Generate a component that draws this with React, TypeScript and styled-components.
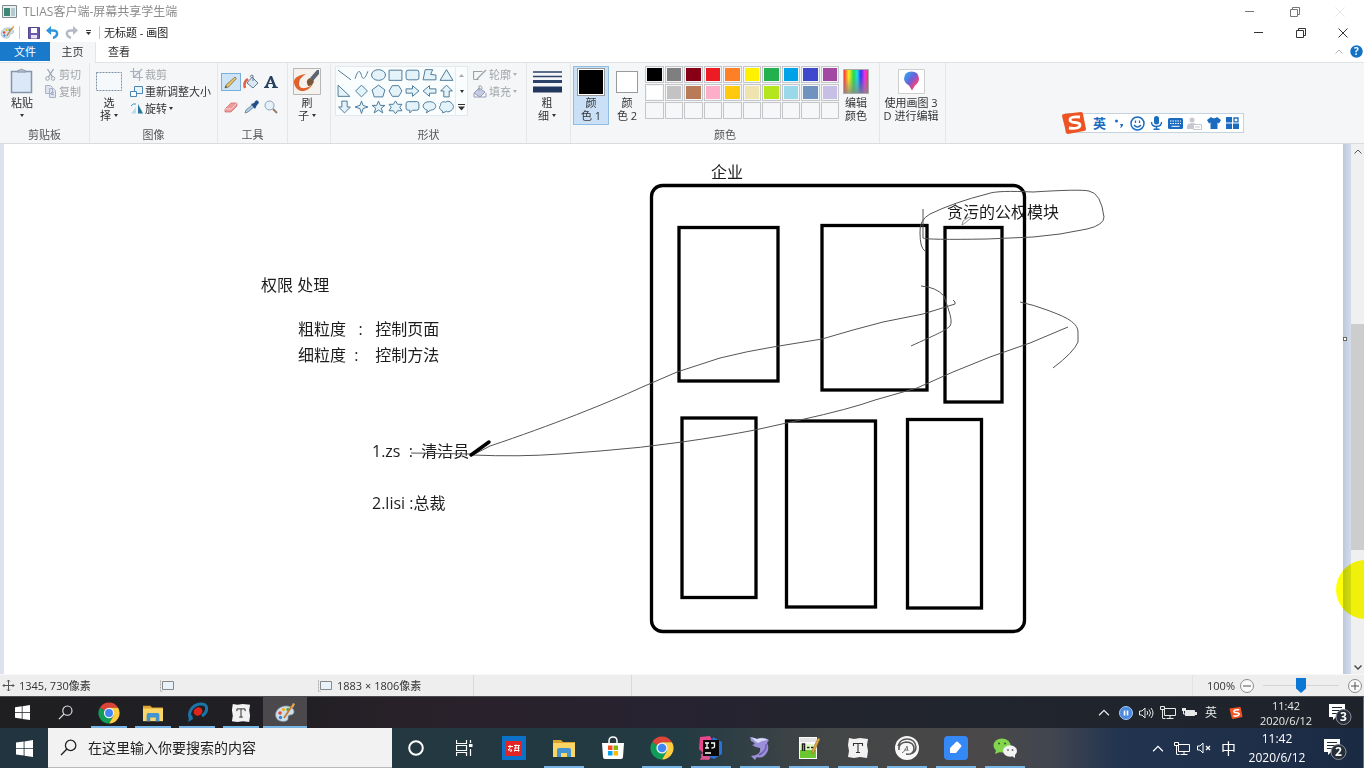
import React from "react";
import styled, { createGlobalStyle, css } from "styled-components";

const GlobalStyle = createGlobalStyle`
  * { box-sizing: border-box; }
  html, body { margin: 0; padding: 0; }
  body {
    font-family: "Open Sans", "Noto Sans CJK SC", sans-serif;
    font-size: 11px;
    line-height: 13px;
    color: #333;
    background: #fff;
    overflow: hidden;
  }
  button, input, select { font: inherit; color: inherit; }
  svg { display: block; flex: none; }
`;

const plainButton = css`
  border: 0;
  padding: 0;
  margin: 0;
  background: none;
  display: flex;
  align-items: center;
  justify-content: center;
`;

const Screen = styled.div`
  position: relative;
  display: flex;
  flex-direction: column;
  min-height: 100vh;
  overflow: hidden;
`;

/* ---------- window chrome ---------- */

const TitleBar = styled.header`
  display: flex;
  align-items: center;
  height: 23px;
  padding-left: 2px;
  gap: 5px;
  font-size: 12px;
  line-height: 16px;
  color: #8a8a8a;
`;

const QuickBar = styled.div`
  display: flex;
  align-items: center;
  height: 19px;
  color: #222;
`;

const Spacer = styled.div`
  flex: 1;
`;

const WindowButton = styled.button<{ $width: number; $tone: string }>`
  ${plainButton}
  width: ${(p) => p.$width}px;
  height: 19px;
  color: ${(p) => p.$tone};
`;

const WindowButtons = styled.div<{ $end?: number }>`
  display: flex;
  padding-right: ${(p) => p.$end ?? 0}px;
`;

const QuickButton = styled.button<{ $narrow?: boolean }>`
  ${plainButton}
  width: ${(p) => (p.$narrow ? 14 : 19)}px;
  height: 17px;
`;

const Separator = styled.span`
  width: 1px;
  height: 13px;
  background: #c8c8c8;
  margin: 0 4px;
`;

const TabRow = styled.nav`
  display: flex;
  height: 20px;
`;

const Tab = styled.button<{ $kind?: "file" | "active" }>`
  ${plainButton}
  width: ${(p) => (p.$kind === "file" ? 50 : 46)}px;
  height: ${(p) => (p.$kind === "active" ? 21 : 19)}px;
  padding-bottom: ${(p) => (p.$kind === "active" ? 2 : 0)}px;
  background: ${(p) => (p.$kind === "file" ? "#1979ca" : p.$kind === "active" ? "#f4f6f7" : "transparent")};
  color: ${(p) => (p.$kind === "file" ? "#fff" : "#333")};
  border-right: ${(p) => (p.$kind === "active" ? "1px solid #e3e5e8" : "0")};
  z-index: 1;
`;

/* ---------- ribbon ---------- */

const Ribbon = styled.section`
  display: flex;
  height: 82px;
  background: #f4f6f7;
  border-top: 1px solid #dfe3e6;
  border-bottom: 1px solid #d8dcdf;
`;

const GroupBox = styled.div<{ $width: number }>`
  width: ${(p) => p.$width}px;
  display: flex;
  flex-direction: column;
  justify-content: space-between;
  flex: none;
  padding: 3px 0 2px;
  border-right: 1px solid #e4e7ea;
`;

const GroupBody = styled.div<{ $pad?: number; $gap?: number }>`
  display: flex;
  align-items: flex-start;
  padding-left: ${(p) => p.$pad ?? 0}px;
  gap: ${(p) => p.$gap ?? 0}px;
`;

const GroupName = styled.div`
  text-align: center;
  color: #555;
`;

const BigButton = styled.button<{ $width: number; $on?: boolean }>`
  ${plainButton}
  flex-direction: column;
  justify-content: flex-start;
  width: ${(p) => p.$width}px;
  height: 59px;
  border: 1px solid ${(p) => (p.$on ? "#92bde3" : "transparent")};
  background: ${(p) => (p.$on ? "#c9e0f7" : "transparent")};
  white-space: nowrap;
`;

const BigIcon = styled.span`
  display: flex;
  align-items: center;
  justify-content: center;
  height: 29px;
`;

const TextLine = styled.span`
  display: flex;
  align-items: center;
  gap: 3px;
  height: 13px;
`;

const ButtonColumn = styled.div`
  display: flex;
  flex-direction: column;
`;

const SmallButton = styled.button<{ $dim?: boolean }>`
  ${plainButton}
  justify-content: flex-start;
  gap: 2px;
  height: 17px;
  color: ${(p) => (p.$dim ? "#a3a6aa" : "#333")};
  white-space: nowrap;
`;

const Caret = styled.i<{ $dim?: boolean }>`
  border: 2px solid transparent;
  border-top: 3px solid ${(p) => (p.$dim ? "#b0b0b0" : "#333")};
  border-bottom: 0;
`;

const ToolGrid = styled.div`
  display: grid;
  grid-template-columns: repeat(3, 20px);
  grid-auto-rows: 18px;
  row-gap: 7px;
  padding: 7px 0 0 3px;
`;

const ToolButton = styled.button<{ $on?: boolean }>`
  ${plainButton}
  border: 1px solid ${(p) => (p.$on ? "#7aaedb" : "transparent")};
  background: ${(p) => (p.$on ? "#cde4f8" : "transparent")};
`;

const Gallery = styled.div`
  display: flex;
  border: 1px solid #e3e8ec;
  background: #fafdfe;
`;

const ShapeGrid = styled.div`
  display: grid;
  grid-template-columns: repeat(7, 17px);
  grid-auto-rows: 16px;
`;

const ShapeButton = styled.button`
  ${plainButton}
`;

const GalleryScroll = styled.div`
  display: flex;
  flex-direction: column;
  width: 12px;
  border-left: 1px solid #e9edf0;
`;

const GalleryArrow = styled.button`
  ${plainButton}
  height: 16px;
`;

const Well = styled.span<{ $color: string; $size: number }>`
  width: ${(p) => p.$size}px;
  height: ${(p) => p.$size}px;
  background: ${(p) => p.$color};
  border: 1px solid #9a9a9a;
  box-shadow: inset 0 0 0 1px #fff;
`;

const Palette = styled.div`
  display: grid;
  width: 194px;
  grid-template-columns: repeat(10, 1fr);
  grid-auto-rows: 17px;
  gap: 1px;
`;

const Swatch = styled.button<{ $color: string }>`
  border: 1px solid #c4c6c9;
  padding: 1px;
  background: ${(p) => p.$color} content-box;
`;

/* ---------- drawing area ---------- */

const Workspace = styled.main`
  position: relative;
  flex: 1;
  min-height: 530px;
  display: flex;
  background: linear-gradient(90deg, #dde3ee, #c2cde0);
  padding-left: 4px;
`;

const Canvas = styled.div`
  position: relative;
  flex: 1;
  overflow: hidden;
  background: #fff;
`;

const CanvasEdge = styled.div`
  position: relative;
  width: 8px;
  background: linear-gradient(90deg, #bdc8db, #d3dceb);
`;

const ResizeHandle = styled.i`
  position: absolute;
  top: 193px;
  left: 0;
  width: 4px;
  height: 4px;
  border: 1px solid #666;
  background: #fff;
`;

const ScrollTrack = styled.div`
  display: flex;
  flex-direction: column;
  align-items: center;
  width: 13px;
  background: #f0f0f0;
  color: #444;
`;

const ScrollButton = styled.button`
  ${plainButton}
  width: 13px;
  height: 14px;
`;

const ScrollThumb = styled.div`
  width: 13px;
  height: 226px;
  background: #cdcdcd;
`;

const TrackPart = styled.div<{ $grow: number }>`
  flex: ${(p) => p.$grow};
`;

const CanvasText = styled.span<{ $x: number; $y: number }>`
  position: absolute;
  left: ${(p) => p.$x}px;
  top: ${(p) => p.$y}px;
  font-size: 16px;
  line-height: 20px;
  color: #1c1c1c;
  white-space: pre;
`;

const Drawing = styled.svg`
  position: absolute;
  left: 0;
  top: 0;
`;

const PointerHalo = styled.i`
  position: absolute;
  right: -31px;
  top: 416px;
  width: 59px;
  height: 59px;
  border-radius: 50%;
  background: #ffff0a;
  mix-blend-mode: multiply;
`;

/* ---------- input method bar ---------- */

const ImeBar = styled.div`
  position: absolute;
  top: 113px;
  right: 120px;
  display: flex;
  align-items: center;
  height: 20px;
  padding: 0 1px 0 24px;
  background: #fff;
  border: 1px solid #c5d3df;
  color: #1b6cc0;
`;

const ImeLogo = styled.span`
  position: absolute;
  left: -5px;
  top: -4px;
`;

const ImeButton = styled.button`
  ${plainButton}
  width: 19px;
  height: 18px;
  font-size: 13px;
  font-weight: 700;
`;

/* ---------- status bar ---------- */

const StatusBar = styled.footer`
  display: flex;
  align-items: center;
  height: 22px;
  background: #eeeeee;
  border-top: 1px solid #f8f8f8;
`;

const StatusCell = styled.div<{ $line?: boolean }>`
  display: flex;
  align-items: center;
  gap: 4px;
  width: 158px;
  height: 21px;
  padding-left: 2px;
  border-right: 1px solid ${(p) => (p.$line ? "#d9d9d9" : "transparent")};
`;

const ZoomArea = styled.div`
  display: flex;
  align-items: center;
  gap: 5px;
  padding: 0 2px 0 14px;
  height: 21px;
  border-left: 1px solid #e2e2e2;
`;

const RoundButton = styled.button`
  ${plainButton}
  width: 14px;
  height: 14px;
  border: 1px solid #8b8b8b;
  border-radius: 50%;
  background: #fafafa;
`;

const ZoomSlider = styled.input`
  appearance: none;
  width: 84px;
  height: 16px;
  margin: 0;
  background: linear-gradient(#d6d6d6, #d6d6d6) center / 76px 1px no-repeat;
  &::-webkit-slider-thumb {
    appearance: none;
    width: 10px;
    height: 15px;
    background: #0b78d4;
    clip-path: polygon(0 0, 100% 0, 100% 70%, 50% 100%, 0 70%);
  }
`;

/* ---------- task bars ---------- */

const InnerTaskbar = styled.div`
  display: flex;
  height: 32px;
  background: linear-gradient(90deg, #1f1f22 0, #211f24 22%, #292129 30%, #272331 50%, #22252e 62%, #1e232b 100%);
  border-top: 1px solid #4d4d50;
  color: #e8e8e8;
`;

const OuterTaskbar = styled.div`
  display: flex;
  height: 40px;
  background: linear-gradient(90deg, #22343f 0, #233941 40%, #233b43 50%, #424546 60%, #4a4848 72%, #424650 77%, #223450 82%, #1b2a43 100%);
  color: #fff;
`;

const TaskButton = styled.button<{ $width: number; $line?: number; $on?: boolean }>`
  ${plainButton}
  width: ${(p) => p.$width}px;
  background: ${(p) => (p.$on ? "#4b494c" : "none")};
  ${(p) =>
    p.$line &&
    css`
      background-image: linear-gradient(#76b5e6, #76b5e6);
      background-size: ${p.$line}px 2px;
      background-position: center bottom;
      background-repeat: no-repeat;
    `}
`;

const SearchBox = styled.label`
  display: flex;
  align-items: center;
  gap: 11px;
  width: 344px;
  padding-left: 12px;
  background: #f2f2f2;
  border-bottom: 1px solid #b9b9b9;
  color: #222;
`;

const SearchInput = styled.input`
  flex: 1;
  min-width: 0;
  border: 0;
  padding: 0;
  outline: 0;
  background: none;
  font-size: 14px;
  line-height: 20px;
  &::placeholder { color: #222; opacity: 1; }
`;

const Tray = styled.div<{ $end: number }>`
  display: flex;
  align-items: center;
  padding-right: ${(p) => p.$end}px;
`;

const TrayButton = styled.button<{ $width?: number; $size?: number }>`
  ${plainButton}
  width: ${(p) => p.$width ?? 22}px;
  height: 28px;
  font-size: ${(p) => p.$size ?? 12}px;
`;

const Clock = styled.button<{ $size: number; $line: number; $width: number }>`
  ${plainButton}
  flex-direction: column;
  width: ${(p) => p.$width}px;
  font-size: ${(p) => p.$size}px;
  line-height: ${(p) => p.$line}px;
`;

const DesktopEdge = styled.i`
  width: 1px;
  align-self: stretch;
  background: #6b7079;
`;

/* ---------- icons ---------- */

type IconProps = { w: number; h?: number; box?: string; children: React.ReactNode };
const Icon = ({ w, h = w, box, children }: IconProps) => (
  <svg width={w} height={h} viewBox={box ?? `0 0 ${w} ${h}`} fill="none" aria-hidden="true">
    {children}
  </svg>
);

const MinIcon = () => <Icon w={10}><path d="M0 4.5h9" stroke="currentColor" /></Icon>;
const RestoreIcon = () => (
  <Icon w={10}><path d="M.5 2.5h7v7h-7zM2.500 2.500v-2h7v7h-2" stroke="currentColor" /></Icon>
);
const CloseIcon = () => <Icon w={10}><path d="M.5.5l9 9M9.500.5l-9 9" stroke="currentColor" /></Icon>;
const UpIcon = ({ w = 8 }: { w?: number }) => (
  <Icon w={w} h={w / 2 + 1} box="0 0 8 5"><path d="M.5 4.500L4 1l3.500 3.500" stroke="currentColor" strokeWidth=".9" /></Icon>
);
const DownIcon = () => <Icon w={8} h={5}><path d="M.5.5L4 4 7.500.5" stroke="currentColor" strokeWidth="1.400" /></Icon>;

const PaletteIcon = ({ size }: { size: number }) => (
  <Icon w={size} box="0 0 22 22">
    <path d="M2 15C0 9 6 4 12 4c5 0 8 3 8 6 0 2-2 3-4 3s-2 2-2 4c0 3-10 4-12-2z" fill="#cfe0ea" stroke="#7f9fb2" strokeWidth=".7" />
    <circle cx="6" cy="11" r="1.800" fill="#e04a3a" /><circle cx="9.500" cy="7.500" r="1.700" fill="#f0b429" />
    <circle cx="14" cy="7.500" r="1.700" fill="#58a944" /><circle cx="6.500" cy="15.500" r="1.700" fill="#3a83d0" />
    <path d="M10 16L18 4" stroke="#c47a35" strokeWidth="1.800" /><path d="M17 5l2-4 2 1-2 4z" fill="#e9a44c" />
  </Icon>
);

const WindowsIcon = ({ size }: { size: number }) => (
  <Icon w={size} box="0 0 16 16">
    <path d="M0 2.300l7.200-.9v6.300H0zM8 1.300L16 0v7.700H8zM0 8.400h7.200v6.300L0 13.700zM8 8.400h8V16l-8-1.200z" fill="#fff" />
  </Icon>
);

const SearchIcon = ({ size }: { size: number }) => (
  <Icon w={size} box="0 0 16 16">
    <circle cx="10" cy="6" r="4.900" stroke="currentColor" strokeWidth="1.200" /><path d="M6.500 9.500L1 15" stroke="currentColor" strokeWidth="1.300" />
  </Icon>
);

const ChromeIcon = ({ size }: { size: number }) => (
  <Icon w={size} box="0 0 24 24">
    <path d="M12 12L2.040 6.250A11.500 11.500 0 0 1 21.960 6.250L12 6.250z" fill="#db4437" />
    <path d="M2.040 6.250A11.500 11.500 0 0 0 12 23.500l5-8.600L12 12z" fill="#0f9d58" />
    <path d="M12 6.250h9.960A11.500 11.500 0 0 1 12 23.500l5-8.600z" fill="#ffcd40" />
    <circle cx="12" cy="12" r="5.600" fill="#f3f3f3" /><circle cx="12" cy="12" r="4.300" fill="#4285f4" />
  </Icon>
);

const FolderIcon = ({ size }: { size: number }) => (
  <Icon w={size} box="0 0 22 22">
    <path d="M0 3h8l2 2h12v5H0z" fill="#dca42f" /><path d="M0 6h22v14H0z" fill="#fbd566" />
    <path d="M4 20v-7q0-2 2-2h10q2 0 2 2v7h-4v-4H8v4z" fill="#4494d2" />
  </Icon>
);

const TyporaIcon = ({ size }: { size: number }) => (
  <Icon w={size} box="0 0 22 22">
    <path d="M2 1l5 1 6-1 8 1-1 6 1 6-1 7-7-1-6 1-6-1 1-6-1-6z" fill="#f2f2f2" />
    <path d="M6.500 9V6.500h9V9M11 6.500v9M9 15.500h4" stroke="#333" strokeWidth="1.100" />
  </Icon>
);

const MonitorIcon = () => (
  <Icon w={16} h={13}>
    <path d="M4.500 2.500h11v7h-11zM10 9.500v3M6.500 12.500h7M2.500 4v8M2.500 12.500h3" stroke="currentColor" />
    <path d="M.5.5h4v3h-4z" stroke="currentColor" fill="#222b36" />
  </Icon>
);

const SpeakerIcon = ({ muted }: { muted?: boolean }) => (
  <Icon w={15} h={12}>
    <path d="M.5 4v4h2.500l3 3V1l-3 3z" stroke="currentColor" />
    {muted ? <path d="M9 4l4 4M13 4L9 8" stroke="currentColor" strokeWidth="1.200" /> : (
      <path d="M8 4q1.500 2 0 4M10 2.500q3 3.500 0 7M12 1q4 5 0 10" stroke="currentColor" />
    )}
  </Icon>
);

const SogouIcon = ({ size }: { size: number }) => (
  <Icon w={size} box="0 0 26 24">
    <path d="M1 5q0-2 2-2L20 1q2 0 2 2l3 15q0 2-2 2L7 23q-2 0-2-2z" fill="#ee5423" />
    <path d="M19 6q-10-1-10 3c0 4 10 1 10 5 0 3-5 4-11 3" stroke="#fff" strokeWidth="2.800" />
  </Icon>
);

const NoticeIcon = ({ count }: { count: string }) => (
  <Icon w={24}>
    <path d="M1 3h16v13H8l-3 3v-3H1z" fill="#fff" /><path d="M4 6.500h10M4 9.500h10M4 12.500h7" stroke="#222b36" />
    <circle cx="15.500" cy="16" r="7.500" fill="#252d39" stroke="#8c9199" />
    <text x="15.500" y="20" textAnchor="middle" fontSize="12" fontWeight="700" fill="#fff">{count}</text>
  </Icon>
);

const FrameIcon = () => (
  <Icon w={15} h={12}><path d="M2.500 1.500h11v8h-11z" fill="#e7f2fa" stroke="#888" /><path d="M.5.500v11h2" stroke="#aaa" strokeDasharray="2 1" /></Icon>
);

const shapePaths = [
  "M1 2l12 9", "M1 10C4 0 6 3 7 7s3 4 6-4", "M13.500 6.500a6.500 5 0 1 1-13 0 6.500 5 0 0 1 13 0z", "M1 2h12v9.500H1z",
  "M3 2h8q2 0 2 2v5q0 2-2 2H3q-2 0-2-2V4q0-2 2-2z", "M3 1.500h7L8 6l5 .5V11H1z", "M7 1.500l6 10H1z",
  "M1 1l11 10.500H1z", "M7 1l5.500 5.500L7 12 1.500 6.500z", "M7 1l6 4.500L11 12H3L1 5.500z", "M4 1.500h6l3 5-3 5H4l-3-5z",
  "M1 4.500h6V1.500l6 5-6 5v-3H1z", "M13 4.500H7V1.500l-6 5 6 5v-3h6z", "M4.500 12V6.500H1.500L7 1l5.500 5.500h-3V12z",
  "M4.500 1v5.500H1.500L7 12l5.500-5.500h-3V1z", "M7 1l1.500 4 4.500 1.500L8.500 8 7 12.500 5.500 8 1 6.500 5.500 5z",
  "M7 1l1.700 4H13L9.600 7.600 11 12 7 9.300 3 12l1.400-4.400L1 5h4.300z", "M7 .8L9 4h4l-2 2.700L13 10H9l-2 2.800L5 10H1l2-3.300L1 4h4z",
  "M3 1.500h8q2 0 2 2v4q0 2-2 2H7L4.500 12V9.500H3q-2 0-2-2v-4q0-2 2-2z", "M5 9.500C-1 8 0 1.500 7 1.500s8 7.500 1 8L4 12z",
  "M3 10C0 9 0 6 1.500 5 1 2 4 1 6 2c2-1.500 5-1 5.500 1C14 4 14 8 12 9c-1 2-4 2.500-5 1.500L3.500 12z",
];

const paletteColors = [
  "#000000", "#7f7f7f", "#880015", "#ed1c24", "#ff7f27", "#fff200", "#22b14c", "#00a2e8", "#3f48cc", "#a349a4",
  "#ffffff", "#c3c3c3", "#b97a57", "#ffaec9", "#ffc90e", "#efe4b0", "#b5e61d", "#99d9ea", "#7092be", "#c8bfe7",
  ...Array(10).fill("#f6f7f8"),
];

const notes = [
  { x: 707, y: 18, text: "企业" },
  { x: 943, y: 58, text: "贪污的公权模块" },
  { x: 257, y: 131, text: "权限 处理" },
  { x: 294, y: 175, text: "粗粒度   :   控制页面" },
  { x: 294, y: 201, text: "细粒度  :    控制方法" },
  { x: 368, y: 297, text: "1.zs  :  清洁员" },
  { x: 368, y: 349, text: "2.lisi :总裁" },
];

const Group = ({ name, width, pad, gap, children }: { name?: string; width: number; pad?: number; gap?: number; children: React.ReactNode }) => (
  <GroupBox $width={width}>
    <GroupBody $pad={pad} $gap={gap}>{children}</GroupBody>
    {name && <GroupName>{name}</GroupName>}
  </GroupBox>
);

const RibbonPanel = () => (
  <Ribbon>
    <Group name="剪贴板" width={90} pad={3} gap={3}>
      <BigButton $width={38}>
        <BigIcon>
          <Icon w={24} h={27}>
            <path d="M1.500 3.500h20v21h-20z" fill="#dbe9f7" stroke="#8795ab" strokeWidth="1.500" />
            <path d="M7 4q0-2 3-2 1.500-2 3 0 3 0 3 2z" fill="#b8c5d6" stroke="#8795ab" />
          </Icon>
        </BigIcon>
        <TextLine>粘贴</TextLine>
        <TextLine><Caret /></TextLine>
      </BigButton>
      <ButtonColumn>
        <SmallButton $dim>
          <Icon w={13}><path d="M3.500 1l5 8M9.500 1l-5 8" stroke="#9aa4b2" strokeWidth="1.300" /><circle cx="3.500" cy="10.500" r="1.800" stroke="#9aa4b2" /><circle cx="9" cy="10.500" r="1.800" stroke="#9aa4b2" /></Icon>
          剪切
        </SmallButton>
        <SmallButton $dim>
          <Icon w={13}><path d="M1.500.500h5l2 2v6h-7zM5.500 3.500h4l2 2v7h-6z" fill="#dde3f0" stroke="#a8b2c8" /><path d="M7 7.500h3M7 9.500h3" stroke="#a8b2c8" /></Icon>
          复制
        </SmallButton>
      </ButtonColumn>
    </Group>
    <Group name="图像" width={128} pad={2} gap={4}>
      <BigButton $width={34}>
        <BigIcon><Icon w={26} h={19}><path d="M.5.500h25v18H.5z" fill="#f5f9fc" stroke="#7d90a5" strokeDasharray="2 1" /></Icon></BigIcon>
        <TextLine>选</TextLine>
        <TextLine>择<Caret /></TextLine>
      </BigButton>
      <ButtonColumn>
        <SmallButton $dim>
          <Icon w={13}><path d="M3.500 0v9.500H13M0 3.500h9.500V13M4 9L12 1" stroke="#a7b0be" strokeWidth="1.200" /></Icon>
          裁剪
        </SmallButton>
        <SmallButton>
          <Icon w={13}><path d="M4.500 1.500h8v7h-8z" fill="#eaf4fb" stroke="#4b86b5" /><path d="M.5 6.500h6v5h-6z" fill="#fff" stroke="#4b86b5" /></Icon>
          重新调整大小
        </SmallButton>
        <SmallButton>
          <Icon w={13}><path d="M8 2l5 9.500H8z" fill="#25789c" /><path d="M6 5v6.500H1z" fill="#bcdbed" /><path d="M1 4q2-3 5-2" stroke="#3f93bb" /></Icon>
          旋转<Caret />
        </SmallButton>
      </ButtonColumn>
    </Group>
    <Group name="工具" width={70}>
      <ToolGrid>
        <ToolButton $on aria-label="铅笔"><Icon w={16}><path d="M2 14l1-3 9-8 1.500 1.500-8 8.500z" fill="#e8c36a" stroke="#6b5c3d" strokeWidth=".7" /><path d="M2 14l1-2 1 1z" fill="#333" /></Icon></ToolButton>
        <ToolButton aria-label="填充"><Icon w={16}><path d="M2 14q-2-6 3-9" stroke="#e16144" strokeWidth="2.500" /><path d="M9 3l6 6-5 5-6-5z" fill="#d8e7f1" stroke="#637b8e" /><path d="M10 7V1.500Q8 0 7 3" stroke="#637b8e" /></Icon></ToolButton>
        <ToolButton aria-label="文本"><Icon w={14}><path d="M0 13v-1q1 0 2-2L6 1h2l4 10q.5 1 2 1v1H8v-1q1.500 0 1-1.500L8.500 9h-4L4 10.500Q3.500 12 5 12v1zM5 8h3L6.500 4z" fill="#24415f" fillRule="evenodd" /></Icon></ToolButton>
        <ToolButton aria-label="橡皮擦"><Icon w={16}><path d="M2 10l6-6h6v3l-6 6H2z" fill="#ef9a9a" stroke="#cf6666" strokeWidth=".7" /><path d="M2 10h6l6-6" stroke="#fbd0d0" /></Icon></ToolButton>
        <ToolButton aria-label="取色器"><Icon w={16}><path d="M2 14l1-3 6-5 2 2-6 5z" fill="#a9cbe5" stroke="#55718a" strokeWidth=".7" /><path d="M8 5l3-1q2-4 4-2 2 2-1 4l-2 4z" fill="#24508a" /></Icon></ToolButton>
        <ToolButton aria-label="放大镜"><Icon w={16}><circle cx="6.500" cy="6.500" r="4.500" fill="#e4f1fa" stroke="#8ba3b8" /><path d="M10 10l4 4" stroke="#9b7c63" strokeWidth="2" /></Icon></ToolButton>
      </ToolGrid>
    </Group>
    <Group width={43} pad={1}>
      <BigButton $width={36}>
        <BigIcon>
          <Icon w={28} h={27}>
            <path d="M.5.500h27v26H.5z" fill="#f5f2ee" stroke="#b7b7b7" />
            <path d="M13 6Q0 8 1 15c2 10 13 11 19 1-5 5-14 6-14 0Q6 10 13 6z" fill="#e2612a" />
            <path d="M14 15q-1-3 3-5l4 3q-1 5-6 5z" fill="#7c5638" /><path d="M17 10l7-8h2v4l-6 7z" fill="#5b6470" />
          </Icon>
        </BigIcon>
        <TextLine>刷</TextLine>
        <TextLine>子<Caret /></TextLine>
      </BigButton>
    </Group>
    <Group name="形状" width={196} pad={4} gap={5}>
      <Gallery>
        <ShapeGrid>
          {shapePaths.map((d, i) => (
            <ShapeButton key={i} aria-label={`形状 ${i + 1}`}>
              <Icon w={15} h={14} box="0 0 14 13"><path d={d} fill={i < 2 ? "none" : "#e3f3f9"} stroke="#4a7898" strokeWidth=".9" /></Icon>
            </ShapeButton>
          ))}
        </ShapeGrid>
        <GalleryScroll>
          <GalleryArrow aria-label="上"><Icon w={5} h={3}><path d="M0 3h5L2.500 0z" fill="#aaa" /></Icon></GalleryArrow>
          <GalleryArrow aria-label="下"><Caret /></GalleryArrow>
          <GalleryArrow aria-label="更多"><Icon w={7} h={7}><path d="M0 .5h7" stroke="#333" /><path d="M0 2.500h7L3.500 6.500z" fill="#333" /></Icon></GalleryArrow>
        </GalleryScroll>
      </Gallery>
      <ButtonColumn>
        <SmallButton $dim>
          <Icon w={14} h={12}><path d="M.5 10V2.500h9M.5 10.500h5M4 10l9-9" stroke="#9ba1a9" strokeWidth="1.200" /></Icon>
          轮廓 <Caret $dim />
        </SmallButton>
        <SmallButton $dim>
          <Icon w={14} h={13}><path d="M1 8l5-5 6 4-5 5z" fill="#c5cbe0" stroke="#969fb8" /><path d="M6 6V1q3-1 3 3M1 8v4h12V8" stroke="#969fb8" /></Icon>
          填充 <Caret $dim />
        </SmallButton>
      </ButtonColumn>
    </Group>
    <Group width={44} pad={2}>
      <BigButton $width={36}>
        <BigIcon><Icon w={29} h={22}><path d="M0 1h29M0 5.500h29" stroke="#2c4268" strokeWidth="1.500" /><path d="M0 10.500h29" stroke="#2c4268" strokeWidth="3" /><path d="M0 18.500h29" stroke="#22375e" strokeWidth="6" /></Icon></BigIcon>
        <TextLine>粗</TextLine>
        <TextLine>细<Caret /></TextLine>
      </BigButton>
    </Group>
    <Group name="颜色" width={309} pad={2}>
      <BigButton $width={36} $on>
        <BigIcon><Well $color="#000" $size={28} /></BigIcon>
        <TextLine>颜</TextLine>
        <TextLine>色 1</TextLine>
      </BigButton>
      <BigButton $width={36}>
        <BigIcon><Well $color="#fff" $size={22} /></BigIcon>
        <TextLine>颜</TextLine>
        <TextLine>色 2</TextLine>
      </BigButton>
      <Palette>
        {paletteColors.map((color, i) => <Swatch key={i} $color={color} aria-label={`颜色 ${i + 1}`} />)}
      </Palette>
      <BigButton $width={34}>
        <BigIcon>
          <Icon w={26} h={25}>
            <defs>
              <linearGradient id="hue"><stop offset="0" stopColor="#f33" /><stop offset=".2" stopColor="#fe2" /><stop offset=".4" stopColor="#2d4" /><stop offset=".55" stopColor="#2de" /><stop offset=".7" stopColor="#33e" /><stop offset=".87" stopColor="#e3e" /><stop offset="1" stopColor="#f33" /></linearGradient>
              <linearGradient id="fade" x2="0" y2="1"><stop offset=".3" stopColor="#888" stopOpacity="0" /><stop offset="1" stopColor="#888" stopOpacity=".8" /></linearGradient>
            </defs>
            <path d="M1 1h24v23H1z" fill="url(#hue)" /><path d="M.5.500h25v24H.5z" fill="url(#fade)" stroke="#aaa" />
          </Icon>
        </BigIcon>
        <TextLine>编辑</TextLine>
        <TextLine>颜色</TextLine>
      </BigButton>
    </Group>
    <Group width={66}>
      <BigButton $width={62}>
        <BigIcon>
          <Icon w={27} h={25}>
            <defs><linearGradient id="pin" x1="0" y1="0" x2="1" y2="1"><stop offset="0" stopColor="#25b8ee" /><stop offset=".45" stopColor="#6b61dc" /><stop offset=".7" stopColor="#e44584" /><stop offset="1" stopColor="#f7953b" /></linearGradient></defs>
            <path d="M.5.500h26v24H.5z" fill="#fff" stroke="#cfcfcf" />
            <path d="M13.500 2.500q7 0 7.500 7 0 4-4 7l-3 5-3-5q-5-3-5-7 .5-7 7.500-7z" fill="url(#pin)" />
          </Icon>
        </BigIcon>
        <TextLine>使用画图 3</TextLine>
        <TextLine>D 进行编辑</TextLine>
      </BigButton>
    </Group>
  </Ribbon>
);

const strokes = [
  "M411 453l60 1",
  "M471 456L490 446C550 426 610 402 640 388L677 372L720 358Q748 351 773 347L822 339L853 330L883 322L923 314L955 304V302L953 300",
  "M472 455Q520 457 560 454L600 451Q640 448 682 442T755 430L800 420Q850 409 875 400L917 388L953 372L990 357L1030 343L1068 327",
  "M1020 302Q1034 305 1047 310C1060 315 1078 321 1078 332V342Q1074 352 1053 368",
  "M921 286Q936 287 944 296L948 308Q953 322 950 326C945 331 935 335 911 346",
  "M923 209V238Q926 240 987 239L1033 237Q1060 235 1087 229Q1104 225 1104 217Q1101 193 1089 191Q1080 189 1033 192C1010 191 995 191 987 194Q955 202 930 214Q919 220 920 233Q920 248 925 251",
];

const Picture = () => (
  <Canvas>
    {notes.map((n) => <CanvasText key={n.text} $x={n.x} $y={n.y}>{n.text}</CanvasText>)}
    <Drawing width="1339" height="530" viewBox="4 144 1339 530" fill="none" aria-hidden="true">
      <g stroke="#000" strokeWidth="3.300">
        <rect x="651.5" y="185.500" width="373" height="446" rx="11" />
        <rect x="679" y="227.500" width="99" height="153.500" />
        <rect x="822" y="225.500" width="105" height="164.500" />
        <rect x="945" y="227.500" width="57" height="174.500" />
        <rect x="682" y="418" width="74" height="179.500" />
        <rect x="786.500" y="421" width="89" height="186" />
        <rect x="907.500" y="419.500" width="74" height="188.500" />
      </g>
      {strokes.map((d) => <path key={d} d={d} stroke="#555" strokeWidth="1" />)}
      <path d="M471 455l18-13" stroke="#000" strokeWidth="3.500" strokeLinecap="round" />
      <path d="M962 225l1-4 6-4 2 1-6 5z" fill="#fff" stroke="#777" strokeWidth=".8" />
    </Drawing>
  </Canvas>
);

const App = () => (
  <Screen>
    <GlobalStyle />
    <TitleBar>
      <Icon w={16} h={15}><path d="M.5 1.500h14v12H.5z" fill="#e8f0f0" stroke="#7d8b8d" /><path d="M2 4h6v8H2z" fill="#3d8674" /><path d="M9 4h4v8H9z" fill="#b3cbd0" /></Icon>
      TLIAS客户端-屏幕共享学生端
      <Spacer />
      <WindowButtons $end={2}>
        <WindowButton $width={45} $tone="#777" aria-label="最小化"><MinIcon /></WindowButton>
        <WindowButton $width={45} $tone="#777" aria-label="还原"><RestoreIcon /></WindowButton>
        <WindowButton $width={45} $tone="#e6e6e6" aria-label="关闭"><CloseIcon /></WindowButton>
      </WindowButtons>
    </TitleBar>
    <QuickBar>
      <PaletteIcon size={15} />
      <Separator />
      <QuickButton aria-label="保存"><Icon w={12}><path d="M.5.500h11v11H.5z" fill="#6a5aa8" stroke="#55468f" /><path d="M3 1h6v5H3z" fill="#fff" /><path d="M3 8h6v3.500H3z" fill="#e6e0f5" /></Icon></QuickButton>
      <QuickButton aria-label="撤消"><Icon w={13}><path d="M2 4.500h5c6 0 5 6 0 7.500" stroke="#2d96dc" strokeWidth="2.400" /><path d="M0 4.500L5 0v9z" fill="#2d96dc" /></Icon></QuickButton>
      <QuickButton aria-label="重做"><Icon w={13}><path d="M11 4.500H6c-6 0-5 6 0 7.500" stroke="#b3bac4" strokeWidth="2.400" /><path d="M13 4.500L8 0v9z" fill="#b3bac4" /></Icon></QuickButton>
      <QuickButton $narrow aria-label="自定义快速访问工具栏"><Icon w={5} h={5}><path d="M0 .5h5" stroke="#333" /><path d="M0 2h5L2.500 5z" fill="#333" /></Icon></QuickButton>
      <Separator />
      无标题 - 画图
      <Spacer />
      <WindowButtons>
        <WindowButton $width={42} $tone="#333" aria-label="最小化"><MinIcon /></WindowButton>
        <WindowButton $width={42} $tone="#333" aria-label="还原"><RestoreIcon /></WindowButton>
        <WindowButton $width={42} $tone="#333" aria-label="关闭"><CloseIcon /></WindowButton>
      </WindowButtons>
    </QuickBar>
    <TabRow>
      <Tab $kind="file">文件</Tab>
      <Tab $kind="active">主页</Tab>
      <Tab>查看</Tab>
      <Spacer />
      <WindowButton $width={18} $tone="#aaa" aria-label="折叠功能区"><UpIcon /></WindowButton>
      <WindowButton $width={16} $tone="#fff" aria-label="帮助">
        <Icon w={13}><circle cx="6.500" cy="6.500" r="6.200" fill="#1272c4" /><text x="6.500" y="10" textAnchor="middle" fontSize="10" fontWeight="700" fill="#fff">?</text></Icon>
      </WindowButton>
    </TabRow>
    <RibbonPanel />
    <Workspace>
      <Picture />
      <CanvasEdge><ResizeHandle /></CanvasEdge>
      <ScrollTrack>
        <ScrollButton aria-label="向上滚动"><UpIcon /></ScrollButton>
        <TrackPart $grow={167} />
        <ScrollThumb />
        <TrackPart $grow={110} />
        <ScrollButton aria-label="向下滚动"><DownIcon /></ScrollButton>
      </ScrollTrack>
      <PointerHalo />
    </Workspace>
    <StatusBar>
      <StatusCell>
        <Icon w={13}><path d="M6.500 1v11M1 6.500h11M5 2.500L6.500 1 8 2.500M5 10.500L6.500 12 8 10.500M2.500 5L1 6.500 2.500 8M10.500 5L12 6.500 10.500 8" stroke="#555" /></Icon>
        1345, 730像素
      </StatusCell>
      <StatusCell><FrameIcon /></StatusCell>
      <StatusCell $line><FrameIcon />1883 × 1806像素</StatusCell>
      <StatusCell $line />
      <Spacer />
      <ZoomArea>
        <label htmlFor="zoom">100%</label>
        <RoundButton aria-label="缩小"><Icon w={8}><path d="M0 4h8" stroke="#555" /></Icon></RoundButton>
        <ZoomSlider id="zoom" type="range" defaultValue={50} />
        <RoundButton aria-label="放大"><Icon w={8}><path d="M0 4h8M4 0v8" stroke="#555" /></Icon></RoundButton>
      </ZoomArea>
    </StatusBar>
    <InnerTaskbar>
      <TaskButton $width={44} aria-label="开始"><WindowsIcon size={15} /></TaskButton>
      <TaskButton $width={43} aria-label="搜索"><SearchIcon size={15} /></TaskButton>
      <TaskButton $width={44} $line={36} aria-label="Chrome"><ChromeIcon size={22} /></TaskButton>
      <TaskButton $width={44} $line={36} aria-label="文件资源管理器"><FolderIcon size={20} /></TaskButton>
      <TaskButton $width={44} $line={36} aria-label="课堂">
        <Icon w={22}><path d="M5 18C1 11 6 3 14 2c9-1 8 8 2 12" stroke="#1b75a8" strokeWidth="3" /><path d="M2 20q1-5 4-7l1 4z" fill="#1b75a8" /><ellipse cx="12" cy="9.500" rx="4.500" ry="4" fill="#e2231a" transform="rotate(-35 12 9.500)" /></Icon>
      </TaskButton>
      <TaskButton $width={44} $line={36} aria-label="Typora"><TyporaIcon size={20} /></TaskButton>
      <TaskButton $width={44} $line={44} $on aria-label="画图"><PaletteIcon size={22} /></TaskButton>
      <Spacer />
      <Tray $end={5}>
        <TrayButton aria-label="显示隐藏的图标"><UpIcon w={12} /></TrayButton>
        <TrayButton $width={21} aria-label="暂停"><Icon w={14}><circle cx="7" cy="7" r="6.500" fill="#4a8be0" stroke="#a8c8f3" /><path d="M5.500 4.500v5M8.500 4.500v5" stroke="#fff" strokeWidth="1.600" /></Icon></TrayButton>
        <TrayButton $width={21} aria-label="音量"><SpeakerIcon /></TrayButton>
        <TrayButton aria-label="网络"><MonitorIcon /></TrayButton>
        <TrayButton $width={21} aria-label="电池"><Icon w={15} h={9}><path d="M3.500 2.500h9v5h-9z" fill="currentColor" stroke="currentColor" /><path d="M13 4h2v3h-2zM0 0h4v3H0z" fill="currentColor" /><path d="M1.500 3v3h2" stroke="currentColor" /></Icon></TrayButton>
        <TrayButton aria-label="输入法">英</TrayButton>
        <TrayButton $width={28} aria-label="搜狗输入法"><SogouIcon size={14} /></TrayButton>
        <Clock $size={11} $line={15} $width={72}><span>11:42</span><span>2020/6/12</span></Clock>
        <TrayButton $width={36} aria-label="通知"><NoticeIcon count="3" /></TrayButton>
      </Tray>
      <DesktopEdge />
    </InnerTaskbar>
    <OuterTaskbar>
      <TaskButton $width={48} aria-label="开始"><WindowsIcon size={17} /></TaskButton>
      <SearchBox>
        <SearchIcon size={17} />
        <SearchInput aria-label="搜索" placeholder="在这里输入你要搜索的内容" />
      </SearchBox>
      <TaskButton $width={48} aria-label="Cortana"><Icon w={16}><circle cx="8" cy="8" r="6.800" stroke="#fff" strokeWidth="2" /></Icon></TaskButton>
      <TaskButton $width={49} aria-label="任务视图"><Icon w={17} h={16}><path d="M.5 0v3.500h10V0M.5 16v-3.500h10V16M.5 5.500h10v5H.5zM14.500 0v3M14.500 9v7" stroke="#fff" strokeWidth="1.200" /><path d="M13 4h3.500v3H13z" fill="#fff" /></Icon></TaskButton>
      <TaskButton $width={50} aria-label="阅读"><Icon w={24}><path d="M0 0h24v24H0z" fill="#0b72c9" /><path d="M4 5h16v15H4z" fill="#e42424" /><path d="M6 10.500h5M8 9v3l-2 2h4l-1.500 2M12 9.500h6M12.500 12h5M14 8.500l-1.500 7M16.500 9.500v6M12.500 14.500h5" stroke="#fff" /></Icon></TaskButton>
      <TaskButton $width={49} $line={40} aria-label="文件资源管理器"><FolderIcon size={22} /></TaskButton>
      <TaskButton $width={49} aria-label="应用商店"><Icon w={24}><path d="M1 7h22l-1 14q0 2-2 2H4q-2 0-2-2z" fill="#fff" /><path d="M8 7V5q0-4 4-4t4 4v2" stroke="#fff" strokeWidth="1.500" /><path d="M7 9.500h4.500V14H7z" fill="#f25022" /><path d="M12.500 9.500H17V14h-4.500z" fill="#7fba00" /><path d="M7 15h4.500v4.500H7z" fill="#00a4ef" /><path d="M12.500 15H17v4.500h-4.500z" fill="#ffb900" /></Icon></TaskButton>
      <TaskButton $width={49} $line={40} aria-label="Chrome"><ChromeIcon size={24} /></TaskButton>
      <TaskButton $width={49} $line={40} aria-label="IntelliJ IDEA"><Icon w={24}><path d="M1 1l10-1 4 8-4 15-10 1 3-7L0 13z" fill="#e8478b" /><path d="M14 1l9 5v12l-8 5-7-3z" fill="#2872da" /><path d="M2 18l9-3-1 9-7-1z" fill="#d9578e" /><path d="M4 4h16v16H4z" fill="#090909" /><path d="M6 7h4M8 7v5M6 12h4M12 7h3.500v3.500q0 1.500-3 1.500M6 17h6" stroke="#fff" strokeWidth="1.300" /></Icon></TaskButton>
      <TaskButton $width={49} $line={40} aria-label="Navicat"><Icon w={24}><path d="M2 1l7 2q6-3 12 1l-2 3q3 6-1 11-4 5-9 3l-2 3-4-4 5-1q5-2 4-7-4 0-8-3l3-1-2-2-2-1z" fill="#9a8fd8" /><path d="M3 1l6 2q5-2 11 1l-6 1-4 2-3-2z" fill="#d9dcf5" /><path d="M18 8q1 7-7 11" stroke="#6e61b5" strokeWidth="1.500" /></Icon></TaskButton>
      <TaskButton $width={49} $line={40} aria-label="Notepad++"><Icon w={24}><path d="M2 1h18v22H2z" fill="#fafafa" /><path d="M3 8h16v14H3z" fill="#e3f6c8" /><path d="M3 14h16v8H3z" fill="#6cc62f" /><path d="M3 3h16M3 5h16" stroke="#ccc" /><path d="M5.500 15V8h2v7M10 11.500h2.500M14 11.500h2.500" stroke="#222" strokeWidth="1.500" /><path d="M15 15l6-13 2 1-6 13-2 2z" fill="#e4ac40" stroke="#94692a" strokeWidth=".6" /></Icon></TaskButton>
      <TaskButton $width={49} $line={40} aria-label="Typora"><TyporaIcon size={22} /></TaskButton>
      <TaskButton $width={49} $line={40} aria-label="远程"><Icon w={24}><circle cx="12" cy="12" r="12" fill="#f7f7f7" /><path d="M3 10q2-7 9-7 8 0 9 8 0 6-6 7M4 14q-1-7 7-8 8 0 8 7-1 6-8 5" stroke="#555" strokeWidth="1.500" /><path d="M7 17q3-1 5-7l1 5M9 14h4" stroke="#777" /></Icon></TaskButton>
      <TaskButton $width={49} $line={40} aria-label="笔记"><Icon w={24}><rect width="24" height="24" rx="4" fill="#3489f7" /><path d="M6 17v-5l6-6q1-1 2 0l3 3q1 1 0 2l-5 6z" fill="#fff" /></Icon></TaskButton>
      <TaskButton $width={49} $line={40} aria-label="微信"><Icon w={24}><ellipse cx="9" cy="9.500" rx="8.500" ry="7" fill="#83d54d" /><path d="M3 14l-1 4 5-2" fill="#83d54d" /><ellipse cx="17" cy="15" rx="7" ry="5.800" fill="#f3f3f3" /><path d="M19 20l3 2v-4z" fill="#f3f3f3" /><circle cx="6" cy="7.500" r="1" fill="#315e21" /><circle cx="12" cy="7.500" r="1" fill="#315e21" /><circle cx="15" cy="14" r=".9" fill="#666" /><circle cx="19.500" cy="14" r=".9" fill="#666" /></Icon></TaskButton>
      <Spacer />
      <Tray $end={6}>
        <TrayButton $width={25} aria-label="显示隐藏的图标"><UpIcon w={12} /></TrayButton>
        <TrayButton $width={23} aria-label="网络"><MonitorIcon /></TrayButton>
        <TrayButton $width={23} aria-label="音量"><SpeakerIcon muted /></TrayButton>
        <TrayButton $width={25} $size={15} aria-label="输入法">中</TrayButton>
        <Clock $size={12} $line={19} $width={72}><span>11:42</span><span>2020/6/12</span></Clock>
        <TrayButton $width={44} aria-label="通知"><NoticeIcon count="2" /></TrayButton>
      </Tray>
      <DesktopEdge />
    </OuterTaskbar>
    <ImeBar>
      <ImeLogo><SogouIcon size={26} /></ImeLogo>
      <ImeButton>英</ImeButton>
      <ImeButton aria-label="标点"><Icon w={10}><circle cx="2.500" cy="3" r="1.500" fill="#1b6cc0" /><path d="M6 6h3q0 3-3 4l1-2z" fill="#1b6cc0" /></Icon></ImeButton>
      <ImeButton aria-label="表情"><Icon w={15}><circle cx="7.500" cy="7.500" r="6.500" stroke="#1b6cc0" strokeWidth="1.500" /><path d="M5.500 4.500v2.500M9.500 4.500v2.500M4 9q3.500 4 7 0" stroke="#1b6cc0" strokeWidth="1.300" /></Icon></ImeButton>
      <ImeButton aria-label="语音"><Icon w={13} h={14}><rect x="4" width="5" height="8.500" rx="2.500" fill="#1b6cc0" /><path d="M1.500 6q0 4.500 5 4.500t5-4.500M6.500 10v3M3.500 13.200h6" stroke="#1b6cc0" strokeWidth="1.400" /></Icon></ImeButton>
      <ImeButton aria-label="软键盘"><Icon w={15} h={11}><rect width="15" height="11" rx="1.500" fill="#1b6cc0" /><path d="M2 3h11M2 5.500h11" stroke="#fff" strokeWidth="1.200" strokeDasharray="1.500 1" /><path d="M3.500 8.300h8" stroke="#fff" /></Icon></ImeButton>
      <ImeButton aria-label="账户"><Icon w={15} h={13}><circle cx="5" cy="3" r="2.500" fill="#c9c7d2" /><path d="M0 12V9q1-3 5-3 3 0 4 1v5z" fill="#c9c7d2" /><path d="M6.500 7.500h8v5h-8z" fill="#fff" stroke="#c9c7d2" /><path d="M8 10h5" stroke="#c9c7d2" /></Icon></ImeButton>
      <ImeButton aria-label="皮肤"><Icon w={14} h={12}><path d="M0 3l4-3q3 2.500 6 0l4 3-2 3.500-1.500-1V12h-7V5.500L2 6.500z" fill="#1b6cc0" /></Icon></ImeButton>
      <ImeButton aria-label="工具箱"><Icon w={13} h={12}><path d="M0 0h6v5.500H0zM0 6.500h6V12H0zM7 6.500h6V12H7z" fill="#1b6cc0" /><path d="M8 1h4v3.800H8z" stroke="#1b6cc0" strokeWidth="1.300" /></Icon></ImeButton>
    </ImeBar>
  </Screen>
);

export default App;
